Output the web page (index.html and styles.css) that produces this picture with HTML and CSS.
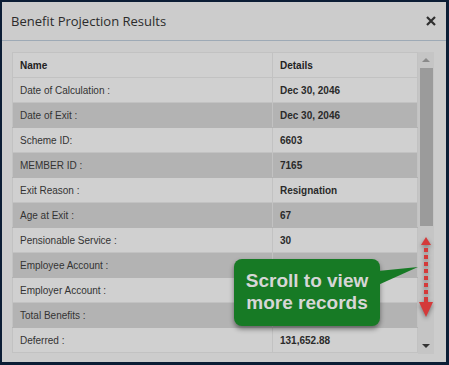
FILE: index.html
```html
<!DOCTYPE html>
<html lang="en">
<head>
    <meta charset="UTF-8">
    <meta name="viewport" content="width=device-width, initial-scale=1.0">
    <title>Benefit Projection Results</title>
    <link rel="stylesheet" href="styles.css">
</head>
<body>
    <div class="dialog">
        <div class="dialog-header">
            <h1 class="dialog-title">Benefit Projection Results</h1>
            <button class="close-btn" aria-label="Close">
                <svg width="10" height="10" viewBox="0 0 10 10">
                    <path d="M1 1 L9 9 M9 1 L1 9" stroke="#2e2e2e" stroke-width="2.2" fill="none"/>
                </svg>
            </button>
        </div>

        <div class="dialog-body">
            <div class="results">
                <div class="table-wrap">
                    <table class="results-table">
                        <thead>
                            <tr><th class="col-name">Name</th><th>Details</th></tr>
                        </thead>
                        <tbody>
                            <tr><td>Date of Calculation :</td><td>Dec 30, 2046</td></tr>
                            <tr><td>Date of Exit :</td><td>Dec 30, 2046</td></tr>
                            <tr><td>Scheme ID:</td><td>6603</td></tr>
                            <tr><td>MEMBER ID :</td><td>7165</td></tr>
                            <tr><td>Exit Reason :</td><td>Resignation</td></tr>
                            <tr><td>Age at Exit :</td><td>67</td></tr>
                            <tr><td>Pensionable Service :</td><td>30</td></tr>
                            <tr><td>Employee Account :</td><td></td></tr>
                            <tr><td>Employer Account :</td><td></td></tr>
                            <tr><td>Total Benefits :</td><td></td></tr>
                            <tr><td>Deferred :</td><td>131,652.88</td></tr>
                        </tbody>
                    </table>
                </div>
                <div class="scrollbar">
                    <div class="scroll-btn"><span class="arrow-up"></span></div>
                    <div class="scroll-track"><div class="scroll-thumb"></div></div>
                    <div class="scroll-btn"><span class="arrow-down"></span></div>
                </div>
            </div>

            <div class="callout">
                Scroll to view<br>more records
                <svg class="callout-tail" width="42" height="20" viewBox="0 0 42 20">
                    <polygon points="0,5 40,1 0,19" fill="#177a25"/>
                </svg>
            </div>

            <svg class="scroll-hint" width="18" height="84" viewBox="0 0 18 84">
                <polygon points="9,0 14,8 4,8" fill="#d43a3a"/>
                <rect x="7" y="11" width="4" height="4" fill="#d43a3a"/>
                <rect x="7" y="18" width="4" height="4" fill="#d43a3a"/>
                <rect x="7" y="25" width="4" height="4" fill="#d43a3a"/>
                <rect x="7" y="32" width="4" height="4" fill="#d43a3a"/>
                <rect x="7" y="39" width="4" height="4" fill="#d43a3a"/>
                <rect x="7" y="46" width="4" height="4" fill="#d43a3a"/>
                <rect x="7" y="53" width="4" height="4" fill="#d43a3a"/>
                <rect x="7" y="60" width="4" height="5" fill="#d43a3a"/>
                <polygon points="2,65 16,65 9,80" fill="#d43a3a"/>
            </svg>
        </div>
    </div>
</body>
</html>
```

FILE: styles.css
```css
body {
    margin: 0;
    padding: 2px 3px 3px 2px;
    background: #0b1d35;
    font-family: 'Liberation Sans', Arial, sans-serif;
    color: #333;
}

.dialog {
    background: #cccccc;
    height: 360px;
    display: flex;
    flex-direction: column;
}

.dialog-header {
    height: 38px;
    display: flex;
    align-items: center;
    justify-content: space-between;
    padding: 0 10px 0 9px;
    border-bottom: 1px solid #9eaab6;
}

.dialog-title {
    margin: 0;
    font-family: 'Open Sans', sans-serif;
    font-size: 13px;
    font-weight: normal;
    color: #2b2b2b;
}

.close-btn {
    background: none;
    border: none;
    padding: 0;
    width: 10px;
    height: 10px;
    display: flex;
    cursor: pointer;
}

.dialog-body {
    position: relative;
    padding: 11px 12px 0 10px;
}

.results {
    display: flex;
    height: 302px;
}

.table-wrap {
    flex: 1;
    overflow: hidden;
}

.results-table {
    width: 100%;
    border-collapse: collapse;
    font-size: 10px;
}

.results-table th,
.results-table td {
    height: 24px;
    padding: 0 7px;
    text-align: left;
    border: 1px solid #c2c2c2;
    border-top: none;
    color: #333;
}

.results-table th {
    border-top: 1px solid #c2c2c2;
    font-weight: bold;
    background: #d0d0d0;
    color: #222;
}

.col-name {
    width: 245px;
}

.results-table td:last-child {
    font-weight: bold;
    color: #2a2a2a;
}

.results-table tbody tr:nth-child(odd) td {
    background: #d0d0d0;
}

.results-table tbody tr:nth-child(even) td {
    background: #b3b3b3;
    border-color: #b3b3b3 #c2c2c2;
}

.scrollbar {
    width: 16px;
    display: flex;
    flex-direction: column;
    background: #c5c5c5;
}

.scroll-btn {
    height: 16px;
    display: flex;
    align-items: center;
    justify-content: center;
}

.arrow-up {
    border: 4px solid transparent;
    border-bottom: 4px solid #8a8a8a;
    border-top: none;
}

.arrow-down {
    border: 4px solid transparent;
    border-top: 4px solid #333;
    border-bottom: none;
}

.scroll-track {
    flex: 1;
    padding: 0 1px 0 2px;
}

.scroll-thumb {
    height: 158px;
    background: #9b9b9b;
}

.callout {
    position: absolute;
    left: 232px;
    top: 218px;
    width: 146px;
    height: 67px;
    box-sizing: border-box;
    padding-top: 11px;
    background: #177a25;
    border-radius: 8px;
    box-shadow: 0 3px 5px rgba(0, 0, 0, 0.45);
    color: #d6d6d6;
    font-size: 19px;
    font-weight: bold;
    line-height: 22px;
    text-align: center;
}

.callout-tail {
    position: absolute;
    left: 144px;
    top: 7px;
}

.scroll-hint {
    position: absolute;
    left: 415px;
    top: 196px;
    filter: drop-shadow(0 2px 2px rgba(0, 0, 0, 0.4));
}
```
